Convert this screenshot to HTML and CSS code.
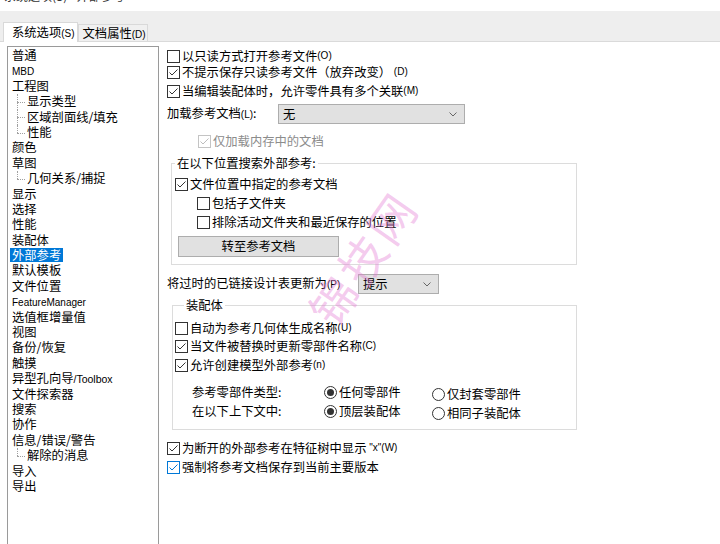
FILE: index.html
```html
<!DOCTYPE html>
<html lang="zh-CN">
<head>
  <meta charset="UTF-8" />
  <title>系统选项 - 外部参考</title>
  <link rel="stylesheet" href="styles.css">
</head>
<body>
  <div class="titlebar"><span>系统选项(S) - 外部参考</span></div>

  <div class="tabs">
    <span class="tab active">系统选项<span class="key">(S)</span></span>
    <span class="tab">文档属性<span class="key">(D)</span></span>
  </div>

  <div class="main">
    <ul class="tree">
      <li>普通</li>
      <li><span class="latin">MBD</span></li>
      <li>工程图</li>
      <li class="child">显示类型</li>
      <li class="child">区域剖面线/填充</li>
      <li class="child last">性能</li>
      <li>颜色</li>
      <li>草图</li>
      <li class="child last">几何关系/捕捉</li>
      <li>显示</li>
      <li>选择</li>
      <li>性能</li>
      <li>装配体</li>
      <li><span class="sel">外部参考</span></li>
      <li>默认模板</li>
      <li>文件位置</li>
      <li><span class="latin">FeatureManager</span></li>
      <li>选值框增量值</li>
      <li>视图</li>
      <li>备份/恢复</li>
      <li>触摸</li>
      <li>异型孔向导<span class="latin tb">/Toolbox</span></li>
      <li>文件探索器</li>
      <li>搜索</li>
      <li>协作</li>
      <li>信息/错误/警告</li>
      <li class="child last">解除的消息</li>
      <li>导入</li>
      <li>导出</li>
    </ul>

    <div class="panel">
      <div class="row">
        <span class="box"></span>以只读方式打开参考文件<span class="key">(O)</span>
      </div>
      <div class="row">
        <span class="box"><svg viewBox="0 0 11 11"><path d="M1.5 5.5L4 8l5.5-5.5"/></svg></span>不提示保存只读参考文件（放弃改变）<span class="key">&nbsp;(D)</span>
      </div>
      <div class="row gap3">
        <span class="box"><svg viewBox="0 0 11 11"><path d="M1.5 5.5L4 8l5.5-5.5"/></svg></span>当编辑装配体时，允许零件具有多个关联<span class="key">(M)</span>
      </div>

      <div class="field-row">
        <span class="field-label w-load">加载参考文档<span class="key">(L)</span>:</span>
        <span class="select w-187">无<svg class="chev" viewBox="0 0 8 5"><path d="M0.5 0.5l3.5 3.5 3.5-3.5"/></svg></span>
      </div>

      <div class="row disabled">
        <span class="box"><svg viewBox="0 0 11 11"><path d="M1.5 5.5L4 8l5.5-5.5"/></svg></span>仅加载内存中的文档
      </div>

      <fieldset class="group search">
        <legend>在以下位置搜索外部参考:</legend>
        <div class="row first">
          <span class="box"><svg viewBox="0 0 11 11"><path d="M1.5 5.5L4 8l5.5-5.5"/></svg></span>文件位置中指定的参考文档
        </div>
        <div class="row gap3 sub">
          <span class="box"></span>包括子文件夹
        </div>
        <div class="row gap3 sub">
          <span class="box"></span>排除活动文件夹和最近保存的位置
        </div>
        <div class="btn">转至参考文档</div>
      </fieldset>

      <div class="field-row update">
        <span class="field-label w-update">将过时的已链接设计表更新为<span class="key">(P)</span></span>
        <span class="select w-81">提示<svg class="chev" viewBox="0 0 8 5"><path d="M0.5 0.5l3.5 3.5 3.5-3.5"/></svg></span>
      </div>

      <fieldset class="group asm">
        <legend>装配体</legend>
        <div class="row first">
          <span class="box"></span>自动为参考几何体生成名称<span class="key">(U)</span>
        </div>
        <div class="row gap2">
          <span class="box"><svg viewBox="0 0 11 11"><path d="M1.5 5.5L4 8l5.5-5.5"/></svg></span>当文件被替换时更新零部件名称<span class="key">(C)</span>
        </div>
        <div class="row gap3">
          <span class="box"><svg viewBox="0 0 11 11"><path d="M1.5 5.5L4 8l5.5-5.5"/></svg></span>允许创建模型外部参考<span class="key">(n)</span>
        </div>

        <div class="choice">
          <span class="row">参考零部件类型:</span>
          <span class="row"><span class="radio on"></span>任何零部件</span>
          <span class="row alt"><span class="radio"></span>仅封套零部件</span>
          <span class="row">在以下上下文中:</span>
          <span class="row"><span class="radio on"></span>顶层装配体</span>
          <span class="row alt"><span class="radio"></span>相同子装配体</span>
        </div>
      </fieldset>

      <div class="row tail">
        <span class="box"><svg viewBox="0 0 11 11"><path d="M1.5 5.5L4 8l5.5-5.5"/></svg></span>为断开的外部参考在特征树中显示<span class="key">&nbsp;"x"(W)</span>
      </div>
      <div class="row gap3 focus">
        <span class="box"><svg viewBox="0 0 11 11"><path d="M1.5 5.5L4 8l5.5-5.5"/></svg></span>强制将参考文档保存到当前主要版本
      </div>
    </div>
  </div>

  <div class="watermark">锦技网</div>
</body>
</html>
```

FILE: styles.css
```css
:root{
  --line:#dcdcdc;
  --ctl:#e1e1e1;
  --ctl-border:#adadad;
  --ink:#333;
  --blue:#0078d7;
}

* { box-sizing: border-box; }
body{
  margin:0; height:544px; overflow:hidden; position:relative;
  font-family: "Noto Sans CJK SC", sans-serif; font-size:12.3px; color:#000; background:#fff;
}

/* window title, mostly scrolled off */
.titlebar{ height:11px; overflow:hidden; font-size:12px; color:#333; padding-left:4px; }
.titlebar span{ display:block; margin-top:-12px; line-height:16px; }

/* tabs */
.tabs{
  height:31px; background:#eee; border-bottom:1px solid #dadada;
  display:flex; align-items:flex-end; padding-left:3px; font-size:12.3px;
}
.tab{
  height:17px; line-height:16px; padding:0 1px 0 4px; white-space:nowrap;
  border:1px solid #d9d9d9; border-bottom:none; background:#f0f0f0;
}
.tab.active{ height:20px; line-height:19px; padding:0 2px 0 8px; background:#fff; margin-bottom:-1px; }

.key{ font-family:"Liberation Sans", sans-serif; font-size:10px; }

/* layout */
.main{ display:flex; gap:8px; padding:4px 0 0 7px; }

/* tree */
.tree{
  list-style:none; margin:0; padding:1px 0 0; flex:none;
  width:152px; min-height:520px; border:1px solid #9a9a9a;
  font-size:12.3px; line-height:15.4px;
}
.tree li{ position:relative; height:15.4px; padding-left:4px; white-space:nowrap; }
.tree li.child{ padding-left:19px; }
.tree li.child::before{
  content:""; position:absolute; left:9px; top:0; height:100%;
  border-left:1px dotted #a0a0a0;
}
.tree li.child.last::before{ height:50%; }
.tree li.child::after{
  content:""; position:absolute; left:9px; top:50%; width:8px;
  border-top:1px dotted #a0a0a0;
}
.latin{ font-family:"Liberation Sans", sans-serif; font-size:10px; }
.latin.tb{ font-size:10.5px; }
.sel{ display:inline-block; line-height:14px; padding:0 2px; margin-left:-2px; background:var(--blue); color:#fff; }

/* right panel */
.panel{ flex:none; width:430px; padding-top:2px; }

.row{ display:flex; align-items:center; height:16px; line-height:16px; white-space:nowrap; }
.gap2{ margin-top:2px; }
.gap3{ margin-top:3px; }

.box{
  width:13px; height:13px; flex:none; margin-right:2px;
  border:1px solid var(--ink); background:#fff; display:flex;
}
.box svg{ width:11px; height:11px; }
.box path{ fill:none; stroke:var(--ink); stroke-width:1; }

.disabled{ margin-top:9px; padding-left:31px; color:#8c8c8c; }
.disabled .box{ border-color:#c4c4c4; }
.disabled .box path{ stroke:#bdbdbd; }

.focus .box{ border-color:var(--blue); }
.focus .box path{ stroke:var(--blue); }

.field-row{ display:flex; align-items:center; height:20px; line-height:16px; margin-top:5px; white-space:nowrap; }
.field-label{ flex:none; }
.w-load{ width:111px; }
.w-update{ width:191px; }
.select{
  height:20px; display:flex; align-items:center; justify-content:space-between;
  padding:0 7px 0 4px; background:var(--ctl); border:1px solid var(--ctl-border);
}
.w-187{ width:187px; }
.w-81{ width:81px; }
.chev{ width:8px; height:5px; }
.chev path{ fill:none; stroke:#666; stroke-width:1; }

/* group boxes */
.group{ margin:0; border:1px solid var(--line); min-width:0; }
.group legend{ padding:0 2px; line-height:16px; }
.group .first{ margin-top:5px; }

.search{ margin:6px 0 0 4px; width:406px; padding:0 0 7px 3px; }
.sub{ padding-left:22px; }
.btn{
  margin:6px 0 0 3px; width:161px; height:21px; line-height:19px; text-align:center;
  background:var(--ctl); border:1px solid var(--ctl-border);
}

.update{ margin-top:9px; }

.asm{ margin:3px 0 0 5px; width:405px; padding:0 0 7px 2px; }
.asm legend{ margin-left:9px; }
.asm .first{ margin-top:7px; }

.choice{
  display:grid; grid-template-columns:132px 108px auto; grid-auto-rows:19px;
  align-items:start; padding-left:17px; margin-top:11px;
}
.choice .alt{ margin-top:2px; }
.radio{
  width:13px; height:13px; flex:none; margin-right:2px; border-radius:50%;
  border:1px solid var(--ink); display:flex; align-items:center; justify-content:center;
}
.radio.on::after{ content:""; width:7px; height:7px; border-radius:50%; background:var(--ink); }

.tail{ margin-top:10px; }

/* watermark over the page */
.watermark{
  position:absolute; left:284px; top:232px; width:156px; text-align:center;
  font-size:46px; line-height:50px; letter-spacing:4px; color:rgba(228,120,210,.4);
  transform:rotate(-55deg); pointer-events:none;
}
```
